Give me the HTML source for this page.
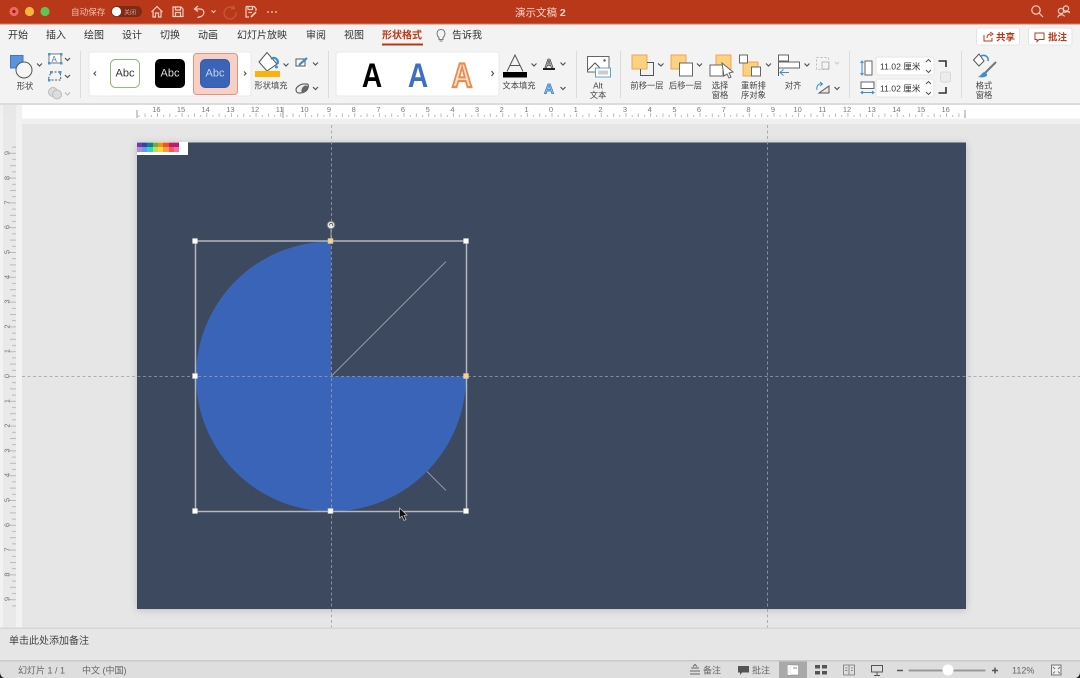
<!DOCTYPE html>
<html><head><meta charset="utf-8"><style>
html,body{margin:0;padding:0;width:1080px;height:678px;overflow:hidden;background:#e6e6e6}
svg{display:block}
text{font-family:"Liberation Sans","Noto Sans CJK SC",sans-serif;fill:#3c3c3c}
.t{font-size:10px;fill:#333}
.s{font-size:8.3px;fill:#444;text-anchor:middle}
.r{font-size:7.5px;fill:#777;text-anchor:middle}
.st{font-size:9px;fill:#666}
.ln{fill:none;stroke:#555;stroke-width:1}
.ch{fill:none;stroke:#555;stroke-width:1.2}
.wh{fill:none;stroke:#f1cfc3;stroke-width:1.2}
.b{fill:none;stroke:#3d8fd0;stroke-width:1}
.o{fill:#fbd27f;stroke:#f0a35a;stroke-width:1}
.w{fill:#fff;stroke:#666;stroke-width:1}
</style></head><body>
<svg width="1080" height="678" viewBox="0 0 1080 678" xmlns="http://www.w3.org/2000/svg">
<defs>
<pattern id="hr" x="551.5" y="0" width="24.66" height="678" patternUnits="userSpaceOnUse">
<path d="M.5 113V117M6.67 115V117M12.83 113.5V117M19 115V117" stroke="#aaa" stroke-width=".8" fill="none"/>
</pattern>
<pattern id="vr" x="0" y="376" width="678" height="24.8" patternUnits="userSpaceOnUse">
<path d="M8 .5H16M12 6.7H16M10 12.9H16M12 19.1H16" stroke="#aaa" stroke-width=".8" fill="none"/>
</pattern>
<filter id="sh" x="-5%" y="-5%" width="110%" height="110%"><feDropShadow dx="0" dy="1" stdDeviation="4" flood-color="#000" flood-opacity=".18"/></filter>
</defs>

<!-- base -->
<rect width="1080" height="678" fill="#e6e6e6"/>
<rect width="1080" height="24" fill="#b9381a"/>
<rect y="23.5" width="1080" height="1" fill="#d47a63"/>
<rect y="24.5" width="1080" height="79" fill="#f3f3f3"/>
<rect y="103" width="1080" height="2" fill="#dcdcdc"/>

<!-- traffic lights -->
<circle cx="14" cy="11.5" r="4.6" fill="#ee6a5f"/><circle cx="14" cy="11.5" r="1.6" fill="#8c1f16"/>
<circle cx="29.5" cy="11.5" r="4.6" fill="#f5b53f"/>
<circle cx="45" cy="11.5" r="4.6" fill="#5fc454"/>
<text x="71" y="15" font-size="8.6" style="fill:#efbfae">自动保存</text>
<rect x="111" y="6" width="31" height="11" rx="5.5" fill="#7d2b16"/>
<circle cx="116.5" cy="11.5" r="4.6" fill="#fff"/>
<text x="124" y="14.3" font-size="6" style="fill:#d9a898">关闭</text>
<!-- qa icons -->
<path class="wh" d="M151.500 12L157 6.500L162.500 12M153 11V17H155.500V13H158.500V17H161V11"/>
<path class="wh" d="M173 7H181L183 9V16.500H173ZM175.500 7V10H180.500V7M175.500 16.500V12.500H180.500V16.500"/>
<path class="wh" stroke-width="1.4" d="M198 6L194.500 9L198 11.500M195 9H200C205 9 205 15 201 16.500L197.500 17.500"/>
<path class="wh" d="M211.500 10.500L213.500 12.500L215.500 10.500"/>
<path fill="none" stroke="#c65a3e" stroke-width="1.2" d="M234 8.500A6 6 0 1 0 236 12M233 5.500L234.500 8.500L231 9"/>
<path class="wh" d="M246 6.500H254L256 8.500V11M248 6.500V9.500H252.500V6.500M246 6.500V17H249M248.500 12.500H252"/>
<path fill="none" stroke="#f1cfc3" stroke-width="1.6" d="M251 17L256 12"/>
<circle cx="268" cy="12" r=".9" fill="#f1cfc3"/><circle cx="272" cy="12" r=".9" fill="#f1cfc3"/><circle cx="276" cy="12" r=".9" fill="#f1cfc3"/>
<text x="515" y="16" font-size="10.5" style="fill:#f3d6cb">演示文稿 <tspan font-weight="bold">2</tspan></text>
<circle cx="1036" cy="10" r="4.2" class="wh"/><path class="wh" d="M1039 13L1043 17"/>
<circle cx="1066" cy="8.500" r="2.600" class="wh"/><circle cx="1061" cy="11" r="2.600" class="wh"/><path class="wh" d="M1058 17.500C1058 14 1064 14 1064.500 16.500M1064 12.500C1066 11.500 1071 11 1069 13"/>

<!-- tabs -->
<g>
<text class="t" x="8" y="38.600">开始</text>
<text class="t" x="46" y="38.600">插入</text>
<text class="t" x="84" y="38.600">绘图</text>
<text class="t" x="122" y="38.600">设计</text>
<text class="t" x="160" y="38.600">切换</text>
<text class="t" x="198" y="38.600">动画</text>
<text class="t" x="237" y="38.600">幻灯片放映</text>
<text class="t" x="306" y="38.600">审阅</text>
<text class="t" x="344" y="38.600">视图</text>
<text class="t" x="382" y="38.600" font-weight="bold" style="fill:#b8391a">形状格式</text>
<text class="t" x="452" y="38.600">告诉我</text>
</g>
<rect x="382" y="43.500" width="41" height="2" fill="#b8391a"/>
<path fill="none" stroke="#777" d="M439 37.500C436 35 436.500 29.500 441 29.500C445.500 29.500 446 35 443 37.500V39.500H439ZM439.500 41H442.500"/>
<rect x="976.500" y="28" width="43" height="17" rx="2" fill="#fff" stroke="#e4e4e4"/>
<rect x="1028.500" y="28" width="43.500" height="17" rx="2" fill="#fff" stroke="#e4e4e4"/>
<path fill="none" stroke="#b8391a" d="M984 35V41H992V38M987 38C987 35 989 34 991 34M990 32L993 34L990 36"/>
<text x="996" y="40.300" font-size="9.500" font-weight="bold" style="fill:#b8391a">共享</text>
<path fill="none" stroke="#b8391a" d="M1035 33H1044V39.500H1039L1037 41.500V39.500H1035Z"/>
<text x="1048" y="40.300" font-size="9.500" font-weight="bold" style="fill:#b8391a">批注</text>

<!-- dividers -->
<path stroke="#dcdcdc" d="M80.500 51V98M328.500 51V98M576.500 51V98M620.500 51V98M849.500 51V98M961.500 51V98"/>

<!-- shapes group -->
<rect x="10.500" y="55.500" width="12.500" height="12.500" fill="#5b93dc" stroke="#3d78c8"/>
<circle cx="24" cy="70" r="8" fill="#f5f5f5" stroke="#555"/>
<path class="ch" d="M37 63.500L39.500 66L42 63.500"/>
<text class="s" x="25" y="89">形状</text>
<rect x="49" y="54" width="12" height="9" fill="#fff" stroke="#555" stroke-width=".8"/>
<text x="51.500" y="62" font-size="8" style="fill:#3d78c8">A</text>
<g fill="#4b96d8"><rect x="48" y="53" width="2.500" height="2.500"/><rect x="60" y="53" width="2.500" height="2.500"/><rect x="48" y="62" width="2.500" height="2.500"/><rect x="60" y="62" width="2.500" height="2.500"/></g>
<path class="ch" d="M65 58L67.500 60.500L70 58M65 75L67.500 77.500L70 75"/>
<path fill="none" stroke="#555" stroke-dasharray="2 1.500" d="M51 72H60L61 80H48Z"/>
<g fill="#4b96d8"><rect x="50" y="71" width="2.500" height="2.500"/><rect x="59" y="71" width="2.500" height="2.500"/><rect x="48" y="79" width="2.500" height="2.500"/></g>
<circle cx="53" cy="92" r="4.500" fill="#ddd" stroke="#bbb"/><circle cx="57" cy="94.500" r="4.500" fill="#ddd" stroke="#bbb"/>
<path d="M65 92.500L67.500 95L70 92.500" fill="none" stroke="#bbb" stroke-width="1.200"/>

<!-- gallery 1 -->
<rect x="89" y="52" width="162" height="44" rx="2" fill="#fff" stroke="#e8e8e8"/>
<path class="ch" stroke-width="1.400" d="M96 71.500L94 73.500L96 75.500M244 71.500L246 73.500L244 75.500"/>
<rect x="193.500" y="53.500" width="44" height="41" rx="3" fill="#f8cfc5" stroke="#e8927c"/>
<rect x="110.500" y="59.500" width="29" height="28" rx="5" fill="#fff" stroke="#8fbb78"/>
<rect x="155" y="59" width="30" height="29" rx="5" fill="#000"/>
<rect x="200.500" y="59.500" width="29" height="28" rx="5" fill="#3a64b8" stroke="#3a5ca8"/>
<g font-size="11" text-anchor="middle"><text x="125" y="76.500" style="fill:#333">Abc</text><text x="170" y="76.500" style="fill:#ddd">Abc</text><text x="215" y="76.500" style="fill:#c8d5f0">Abc</text></g>

<!-- fill -->
<path d="M259 62L267 52.500L277 64L267 71Z" fill="#fff" stroke="#555"/>
<path d="M271 59C275 56 279 60 277.500 64" fill="none" stroke="#3d8fd0" stroke-width="2.200"/><circle cx="276.500" cy="67" r="1.500" fill="#3d8fd0"/>
<rect x="255" y="71" width="25" height="6" fill="#fbb30a"/>
<text class="s" x="271" y="88.500">形状填充</text>
<path class="ch" d="M283.500 63.500L286 66L288.500 63.500M313 62.500L315.500 65L318 62.500M313 87L315.500 89.500L318 87"/>
<path fill="#fff" stroke="#555" d="M296 59H305V66H296Z"/><path stroke="#3d8fd0" stroke-width="2.200" d="M299 65L307 58"/><rect x="295.500" y="67" width="12" height="2" fill="#fff"/>
<path fill="#eee" stroke="#444" d="M296 89.500C296 87 301 84 303 84H307C308.500 84 308.500 86 308 88C307 91 304 93 301 93H298.500C297 93 296 91.500 296 89.500Z"/><path fill="#666" d="M302 93C300.500 90 302 87 305 85.500L308 86C308 90 305 93 302 93Z"/>

<!-- gallery 2 -->
<rect x="336" y="52" width="163" height="44" rx="2" fill="#fff" stroke="#e8e8e8"/>
<g font-size="32" text-anchor="middle" font-weight="bold">
<text transform="translate(372,87) scale(.88,1.08)" style="fill:#000">A</text>
<text transform="translate(418,87) scale(.88,1.08)" style="fill:#3f6fc0">A</text>
<text transform="translate(462,87) scale(.88,1.08)" style="fill:#fbe3cf;stroke:#ec8c4c;stroke-width:2">A</text>
</g>
<path class="ch" d="M491.500 71L493.500 73.500L491.500 76"/>

<!-- text fill -->
<path d="M507 71.500L515 55L523 71.500M510 65.500H520" fill="none" stroke="#555" stroke-width="1"/>
<rect x="503" y="72" width="24" height="5.500" fill="#000"/>
<text class="s" x="519" y="88.500">文本填充</text>
<path class="ch" d="M531.500 63.500L534 66L536.500 63.500M560.500 62.500L563 65L565.500 62.500M560.500 87L563 89.500L565.500 87"/>
<text x="549" y="67.500" font-size="12" text-anchor="middle" font-weight="bold" style="fill:#bbb;stroke:#333;stroke-width:.6">A</text>
<rect x="543" y="68" width="12" height="2" fill="#222"/>
<text x="549" y="93.500" font-size="14" text-anchor="middle" font-weight="bold" style="fill:#8ec4ee;stroke:#2f7cc4;stroke-width:.7">A</text>

<!-- alt text -->
<path d="M587.500 56.500H609V72H587.500Z" fill="#fff" stroke="#666"/>
<path class="ln" d="M588 70L595 63L601 69"/><circle cx="604.500" cy="60.500" r="1.200" fill="#555"/>
<rect x="595.500" y="68" width="15" height="9" fill="#fff" stroke="#5da4d8"/>
<rect x="598" y="70.500" width="10" height="4" fill="#ccc"/>
<text class="s" x="598" y="88.500">Alt</text>
<text class="s" x="598" y="98">文本</text>

<!-- arrange -->
<rect x="632" y="55" width="15" height="14" class="o"/>
<path class="ln" d="M647 62.500H653.500V75.500H640.500V69"/>
<path class="ch" d="M658 63.500L661 66L663.500 63.500M697 63.500L699.500 66L702 63.500"/>
<text class="s" x="647" y="88.500">前移一层</text>
<rect x="671" y="55" width="15" height="14" class="o"/>
<rect x="679.500" y="63" width="13" height="13" class="w"/>
<text class="s" x="685.500" y="88.500">后移一层</text>
<rect x="716" y="55" width="15" height="14" class="o"/>
<rect x="710" y="65" width="13" height="11" class="w"/>
<path d="M722 63L733 72L729 73L731 77L729 78L727 74L724 76Z" fill="#fff" stroke="#666"/>
<text class="s" x="720" y="88.500">选择</text>
<text class="s" x="720" y="98">窗格</text>
<rect x="743" y="62" width="15" height="14" class="o"/>
<rect x="739.500" y="55" width="8" height="8" class="w"/>
<rect x="751.500" y="67" width="9" height="9" class="w"/>
<text class="s" x="753.500" y="88.500">重新排</text>
<text class="s" x="753.500" y="98">序对象</text>
<path class="ch" d="M766 63.500L768.500 66L771 63.500M804.500 63.500L807 66L809.500 63.500M834.500 87L837 89.500L839.500 87"/>
<path d="M778.500 55V76" class="ln"/>
<rect x="778.500" y="55" width="10" height="6" fill="#fff" stroke="#666"/>
<rect x="778.500" y="62" width="21" height="6" fill="#fff" stroke="#666"/>
<path class="b" stroke-width="1.200" d="M780 72.500H789M783.500 69.500L780 72.500L783.500 75.500"/>
<text class="s" x="793" y="88.500">对齐</text>
<g fill="none" stroke="#bbb"><rect x="822" y="62" width="7" height="7"/><rect x="816.500" y="57.500" width="12" height="12" stroke-dasharray="2 2"/></g>
<path d="M835 62L837 64L839 62" fill="none" stroke="#ccc" stroke-width="1.200"/>
<path fill="#e8e8e8" stroke="#555" d="M819 93L829 86V93Z"/>
<path class="b" stroke-width="1.300" d="M817 90C816 86 819 83 822 84M820 82L822.500 84L820 86"/>

<!-- size -->
<rect x="865" y="61" width="7" height="14" fill="#fff" stroke="#666"/>
<path class="b" d="M862 61V75M860.500 63L862 61L863.500 63M860.500 73L862 75L863.500 73"/>
<rect x="861" y="82" width="13" height="6.500" fill="#fff" stroke="#666"/>
<path class="b" d="M861 92.500H874M863 91L861 92.500L863 94M872 91L874 92.500L872 94"/>
<rect x="876" y="57" width="58" height="18" rx="2" fill="#fff" stroke="#e6e6e6"/>
<rect x="876" y="79" width="58" height="18" rx="2" fill="#fff" stroke="#e6e6e6"/>
<text x="880" y="69.500" font-size="8.600" style="fill:#333">11.02 厘米</text>
<text x="880" y="91.500" font-size="8.600" style="fill:#333">11.02 厘米</text>
<path fill="none" stroke="#555" d="M926 62L928.500 59.500L931 62M926 70L928.500 72.500L931 70M926 84L928.500 81.500L931 84M926 92L928.500 94.500L931 92"/>
<path fill="none" stroke="#333" stroke-width="1.600" d="M938.500 61H946V67M938.500 93H946V87"/>
<rect x="940.500" y="72" width="10" height="10" rx="2" fill="#ececec" stroke="#d8d8d8"/>

<!-- format pane -->
<path d="M973.500 60L979 54L984 61L979 66Z" fill="#fff" stroke="#555"/>
<path d="M981 56C985 54 989 57 988 61" fill="none" stroke="#3d8fd0" stroke-width="1.600"/>
<path d="M996 62L984 74" stroke="#777" stroke-width="2" fill="none"/>
<path d="M985 72C982 72 982 75 978 77C983 78 988 77 987 74Z" fill="#3d8fd0"/>
<text class="s" x="984" y="88.500">格式</text>
<text class="s" x="984" y="98">窗格</text>

<!-- rulers -->
<rect x="0" y="105" width="1080" height="13.500" fill="#fff"/>
<rect x="0" y="105" width="3" height="13.500" fill="#f0f0f0"/>
<rect x="3" y="105" width="13" height="13.500" fill="#e8e8e8"/>
<rect x="16" y="105" width="6" height="13.500" fill="#f0f0f0"/>
<rect x="137" y="112" width="829" height="6" fill="url(#hr)"/>
<path d="M137 110V118M965 110V118M283 107V118" stroke="#999"/>
<g>
<text class="r" x="156.400" y="112">16</text><text class="r" x="181" y="112">15</text><text class="r" x="205.700" y="112">14</text><text class="r" x="230.400" y="112">13</text><text class="r" x="255" y="112">12</text><text class="r" x="279.700" y="112">11</text><text class="r" x="304.400" y="112">10</text><text class="r" x="329" y="112">9</text><text class="r" x="353.700" y="112">8</text><text class="r" x="378.400" y="112">7</text><text class="r" x="403" y="112">6</text><text class="r" x="427.700" y="112">5</text><text class="r" x="452.400" y="112">4</text><text class="r" x="477" y="112">3</text><text class="r" x="501.700" y="112">2</text><text class="r" x="526.400" y="112">1</text><text class="r" x="551" y="112">0</text><text class="r" x="575.700" y="112">1</text><text class="r" x="600.400" y="112">2</text><text class="r" x="625" y="112">3</text><text class="r" x="649.700" y="112">4</text><text class="r" x="674.400" y="112">5</text><text class="r" x="699" y="112">6</text><text class="r" x="723.700" y="112">7</text><text class="r" x="748.400" y="112">8</text><text class="r" x="773" y="112">9</text><text class="r" x="797.700" y="112">10</text><text class="r" x="822.400" y="112">11</text><text class="r" x="847" y="112">12</text><text class="r" x="871.700" y="112">13</text><text class="r" x="896.400" y="112">14</text><text class="r" x="921" y="112">15</text><text class="r" x="945.700" y="112">16</text>
</g>
<rect x="22" y="118.500" width="1058" height="5.500" fill="#f0f0f0"/>
<rect x="0" y="118" width="3" height="510" fill="#f2f2f2"/>
<rect x="3" y="118.500" width="13" height="509.500" fill="#e9e9e9"/>
<rect x="16" y="118.500" width="6" height="509.500" fill="#f2f2f2"/>
<rect x="3" y="142" width="14" height="467" fill="url(#vr)"/>
<g>
<text class="r" transform="translate(7,153) rotate(-90)" dy="2.500">9</text><text class="r" transform="translate(7,178) rotate(-90)" dy="2.500">8</text><text class="r" transform="translate(7,202.500) rotate(-90)" dy="2.500">7</text><text class="r" transform="translate(7,227) rotate(-90)" dy="2.500">6</text><text class="r" transform="translate(7,252) rotate(-90)" dy="2.500">5</text><text class="r" transform="translate(7,277) rotate(-90)" dy="2.500">4</text><text class="r" transform="translate(7,301.500) rotate(-90)" dy="2.500">3</text><text class="r" transform="translate(7,326.500) rotate(-90)" dy="2.500">2</text><text class="r" transform="translate(7,351) rotate(-90)" dy="2.500">1</text><text class="r" transform="translate(7,376) rotate(-90)" dy="2.500">0</text><text class="r" transform="translate(7,401) rotate(-90)" dy="2.500">1</text><text class="r" transform="translate(7,425.500) rotate(-90)" dy="2.500">2</text><text class="r" transform="translate(7,450.500) rotate(-90)" dy="2.500">3</text><text class="r" transform="translate(7,475) rotate(-90)" dy="2.500">4</text><text class="r" transform="translate(7,500) rotate(-90)" dy="2.500">5</text><text class="r" transform="translate(7,525) rotate(-90)" dy="2.500">6</text><text class="r" transform="translate(7,549.500) rotate(-90)" dy="2.500">7</text><text class="r" transform="translate(7,574.500) rotate(-90)" dy="2.500">8</text><text class="r" transform="translate(7,599) rotate(-90)" dy="2.500">9</text>
</g>

<!-- slide -->
<rect x="137" y="142.500" width="829" height="466.500" fill="#3c4a5e" filter="url(#sh)"/>
<rect x="137" y="142" width="51" height="13" fill="#fff"/>
<g>
<rect x="137" y="142.500" width="5" height="4.500" fill="#6c3ea0"/><rect x="142" y="142.500" width="5" height="4.500" fill="#33439e"/><rect x="147" y="142.500" width="6" height="4.500" fill="#117e88"/><rect x="153" y="142.500" width="5" height="4.500" fill="#76ad2e"/><rect x="158" y="142.500" width="5" height="4.500" fill="#dd9a1b"/><rect x="163" y="142.500" width="6" height="4.500" fill="#ee5522"/><rect x="169" y="142.500" width="10" height="4.500" fill="#b8206f"/>
<rect x="137" y="147" width="5" height="5" fill="#b08ae0"/><rect x="142" y="147" width="5" height="5" fill="#6e96e8"/><rect x="147" y="147" width="6" height="5" fill="#35d0cc"/><rect x="153" y="147" width="5" height="5" fill="#bedd5a"/><rect x="158" y="147" width="5" height="5" fill="#f9d63c"/><rect x="163" y="147" width="6" height="5" fill="#fb9a4a"/><rect x="169" y="147" width="5" height="5" fill="#f25a5a"/><rect x="174" y="147" width="5" height="5" fill="#fb6aaa"/>
</g>

<!-- pie -->
<path d="M331 241.500A135 135 0 1 0 466 376.500H331Z" fill="#3a64b8"/>
<path d="M331.500 376L446 261.500M427 471.500L446 490.500" stroke="#8f98a5" stroke-width="1" fill="none"/>

<!-- guides -->
<g fill="none" stroke="#9aa0a8" stroke-width=".8" stroke-dasharray="3 2.500">
<path d="M331.500 125V628"/>
<path d="M767.500 125V628"/>
<path d="M22 376.500H1080"/>
</g>

<!-- selection -->
<rect x="195.500" y="241" width="271" height="270.500" fill="none" stroke="#b5b8bb" stroke-width="1.500"/>
<path d="M331 229V241" stroke="#9da2a8"/>
<circle cx="331" cy="225" r="3.800" fill="#e8e8e8" stroke="#777"/>
<path d="M329.500 225.500A1.700 1.700 0 1 1 332.500 226" fill="none" stroke="#555" stroke-width=".8"/>
<g fill="#fff" stroke="#c0c0c0" stroke-width=".5">
<rect x="192.500" y="238.500" width="5" height="5"/><rect x="463.500" y="238.500" width="5" height="5"/>
<rect x="192.500" y="373.500" width="5" height="5"/>
<rect x="192.500" y="508.500" width="5" height="5"/><rect x="328" y="508.500" width="5" height="5"/><rect x="463.500" y="508.500" width="5" height="5"/>
</g>
<g fill="#fbd27f" stroke="#c0c0c0" stroke-width=".5">
<rect x="328" y="238.500" width="5" height="5"/><rect x="463.500" y="373.500" width="5" height="5"/>
</g>
<!-- cursor -->
<path d="M399.500 508L399.500 518L402 516L404 520.500L406 519.500L404 515.500L407 515Z" fill="#111" stroke="#c9c9c9" stroke-width=".7"/>

<!-- notes -->
<rect y="627.500" width="1080" height="1.500" fill="#d6d6d6"/>
<rect y="629" width="1080" height="31" fill="#e6e6e6"/>
<rect y="660" width="1080" height="1.500" fill="#c9c9c9"/>
<rect y="661.500" width="1080" height="16.500" fill="#dedede"/>
<text x="9" y="644" font-size="10" style="fill:#444">单击此处添加备注</text>
<text class="st" x="18" y="673.500">幻灯片 1 / 1</text>
<text class="st" x="82" y="673.500">中文 (中国)</text>

<!-- status right -->
<path d="M691 668H699M690 671H700M690 674H700" stroke="#666" fill="none"/>
<path d="M693 666.500L695 664.500L697 666.500" stroke="#666" fill="none"/>
<text class="st" x="703" y="673.500">备注</text>
<path d="M738 666H749V672.500H742L740 675V672.500H738Z" fill="#555"/>
<text class="st" x="752" y="673.500">批注</text>
<rect x="779" y="661.500" width="28" height="16.500" fill="#a9a9a9"/>
<rect x="787.500" y="665" width="11" height="10" fill="#fff" stroke="#888" stroke-width=".5"/>
<rect x="787.500" y="665" width="3.500" height="10" fill="#f4f4f4"/><path d="M793 668H797" stroke="#888"/>
<g fill="#555"><rect x="815" y="665" width="5" height="3.500"/><rect x="822" y="665" width="5" height="3.500"/><rect x="815" y="671" width="5" height="3.500"/><rect x="822" y="671" width="5" height="3.500"/></g>
<path d="M843.500 665H854.500V675H843.500ZM849 665V675M845 668H847.500M845 670.500H847.500M851 668H853M851 670.500H853" fill="none" stroke="#777" stroke-width=".8"/>
<path d="M871.500 665.500H882.500V672H871.500ZM877 672V675M874 675.500H880" fill="none" stroke="#555"/>
<path d="M897 670.500H903" stroke="#555" stroke-width="1.500"/>
<rect x="908.500" y="669.500" width="77" height="2" rx="1" fill="#9a9a9a"/>
<circle cx="948" cy="670" r="5.500" fill="#fff"/>
<path d="M992 670.500H998M995 667.500V673.500" stroke="#555" stroke-width="1.500"/>
<text class="st" x="1012" y="673.500">112%</text>
<rect x="1051.500" y="665" width="9.500" height="10" fill="#f0f0f0" stroke="#777"/>
<path d="M1053 667L1055 669M1060 667L1058 669M1053 673.500L1055 671.500M1060 673.500L1058 671.500" stroke="#777"/>

<path d="M0 672V678H5C2 678 0 675 0 672ZM1080 672V678H1075C1078 678 1080 675 1080 672Z" fill="#222"/>
</svg>
</body></html>
